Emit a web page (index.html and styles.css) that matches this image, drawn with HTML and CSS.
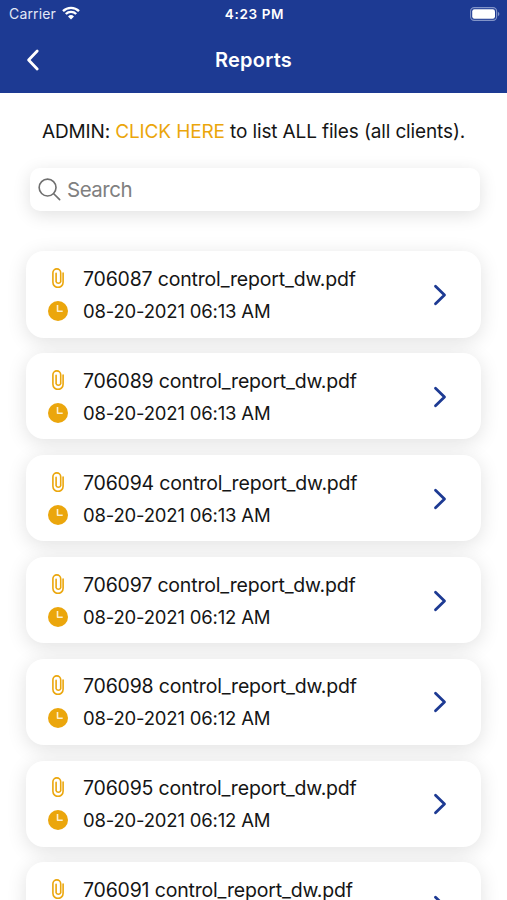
FILE: index.html
```html
<!DOCTYPE html>
<html lang="en">
    <head>
        <meta charset="utf-8">
        <title>Reports</title>
        <link rel="stylesheet" href="styles.css">
    </head>
    <body>
        <svg class="symbols">
            <symbol id="clip" viewBox="0 0 12 20">
                <path d="M11.1 5v9.3a5.1 5.1 0 0 1-10.2 0V4.8a3.9 3.9 0 0 1 7.8 0v9a2.5 2.5 0 0 1-4.6 0V5.4" />
            </symbol>
            <symbol id="clock" viewBox="0 0 20 20">
                <circle cx="10" cy="10" r="10" />
                <path d="M9.5 4v6.2h5.2" />
            </symbol>
            <symbol id="next" viewBox="0 0 14 22">
                <path d="M2.5 2.2l9 8.8-9 8.8" />
            </symbol>
        </svg>
        <header>
            <div class="status">
                <div class="carrier">
                    <span>Carrier</span>
                    <svg class="wifi" viewBox="0 0 18 14">
                        <path d="M1 5.1a11.5 11.5 0 0 1 16 0M3.8 8a7.5 7.5 0 0 1 10.4 0" />
                        <path class="dot" d="M9 13.6l-3-3.1a4.4 4.4 0 0 1 6 0z" />
                    </svg>
                </div>
                <div class="time">4:23 PM</div>
                <div class="power">
                    <svg class="battery" viewBox="0 0 30 14">
                        <rect class="shell" x=".6" y=".6" width="26" height="12.8" rx="3.6" />
                        <rect class="charge" x="2.2" y="2.2" width="22.8" height="9.6" rx="2.2" />
                        <path class="cap" d="M27.9 4.8c2 .8 2 3.6 0 4.4z" />
                    </svg>
                </div>
            </div>
            <nav>
                <a class="back" href="#"><svg viewBox="0 0 14 22"><path d="M11.2 2L2.6 11l8.6 9" /></svg></a>
                <h1>Reports</h1>
            </nav>
        </header>
        <main>
            <p class="admin">ADMIN: <a href="#">CLICK HERE</a> to list ALL files (all clients).</p>
            <label class="search">
                <svg viewBox="0 0 24 24"><circle cx="10" cy="10" r="8.8" /><path d="M16.4 16.4l6.2 6.2" /></svg>
                <input type="text" placeholder="Search">
            </label>
            <div class="list">
                <a class="card" href="#">
                    <svg class="clip"><use href="#clip" /></svg>
                    <span class="file">706087 control_report_dw.pdf</span>
                    <svg class="clock"><use href="#clock" /></svg>
                    <span class="date">08-20-2021 06:13 AM</span>
                    <svg class="next"><use href="#next" /></svg>
                </a>
                <a class="card" href="#">
                    <svg class="clip"><use href="#clip" /></svg>
                    <span class="file">706089 control_report_dw.pdf</span>
                    <svg class="clock"><use href="#clock" /></svg>
                    <span class="date">08-20-2021 06:13 AM</span>
                    <svg class="next"><use href="#next" /></svg>
                </a>
                <a class="card" href="#">
                    <svg class="clip"><use href="#clip" /></svg>
                    <span class="file">706094 control_report_dw.pdf</span>
                    <svg class="clock"><use href="#clock" /></svg>
                    <span class="date">08-20-2021 06:13 AM</span>
                    <svg class="next"><use href="#next" /></svg>
                </a>
                <a class="card" href="#">
                    <svg class="clip"><use href="#clip" /></svg>
                    <span class="file">706097 control_report_dw.pdf</span>
                    <svg class="clock"><use href="#clock" /></svg>
                    <span class="date">08-20-2021 06:12 AM</span>
                    <svg class="next"><use href="#next" /></svg>
                </a>
                <a class="card" href="#">
                    <svg class="clip"><use href="#clip" /></svg>
                    <span class="file">706098 control_report_dw.pdf</span>
                    <svg class="clock"><use href="#clock" /></svg>
                    <span class="date">08-20-2021 06:12 AM</span>
                    <svg class="next"><use href="#next" /></svg>
                </a>
                <a class="card" href="#">
                    <svg class="clip"><use href="#clip" /></svg>
                    <span class="file">706095 control_report_dw.pdf</span>
                    <svg class="clock"><use href="#clock" /></svg>
                    <span class="date">08-20-2021 06:12 AM</span>
                    <svg class="next"><use href="#next" /></svg>
                </a>
                <a class="card" href="#">
                    <svg class="clip"><use href="#clip" /></svg>
                    <span class="file">706091 control_report_dw.pdf</span>
                    <svg class="clock"><use href="#clock" /></svg>
                    <span class="date">08-20-2021 06:12 AM</span>
                    <svg class="next"><use href="#next" /></svg>
                </a>
            </div>
        </main>
    </body>
</html>
```
FILE: styles.css
```css
* {
    margin: 0;
    padding: 0;
    box-sizing: border-box;
}
:root {
    --blue: #1d3a93;
    --yellow: #eba60c;
    --fg-color: #151515;
}
body {
    height: 900px;
    overflow: hidden;
    display: flex;
    flex-direction: column;
    font-family: Inter, "Liberation Sans", sans-serif;
    background-color: #fff;
    color: var(--fg-color);
}
a {
    color: inherit;
    text-decoration: none;
}
svg {
    display: block;
    fill: none;
    stroke-linecap: round;
    stroke-linejoin: round;
}
.symbols {
    position: absolute;
    width: 0;
    height: 0;
}
header {
    flex: none;
    height: 92.5px;
    background-color: var(--blue);
    color: #fff;
}
.status {
    display: grid;
    grid-template-columns: 1fr auto 1fr;
    align-items: center;
    height: 27px;
    padding: 0 7px 0 9px;
    font-size: 14px;
}
.carrier {
    display: flex;
    align-items: center;
    gap: 6px;
    color: #e3e8f6;
    letter-spacing: .15px;
}
.wifi {
    width: 18px;
    height: 14px;
    margin-top: -2px;
    stroke: #fff;
    stroke-width: 2.4;
    stroke-linecap: butt;
}
.wifi .dot {
    fill: #fff;
    stroke: none;
}
.time {
    font-weight: 600;
    font-size: 13.5px;
    letter-spacing: .65px;
}
.power {
    justify-self: end;
}
.battery {
    width: 30px;
    height: 14px;
}
.shell {
    stroke: #8294c8;
    stroke-width: 1.1;
}
.charge {
    fill: #fff;
}
.cap {
    fill: #8294c8;
}
nav {
    display: grid;
    grid-template-columns: 1fr auto 1fr;
    align-items: center;
    height: 65px;
}
.back {
    padding-left: 26px;
}
.back svg {
    width: 14px;
    height: 22px;
    stroke: #fff;
    stroke-width: 2.8;
}
h1 {
    font-size: 20px;
    font-weight: 600;
    letter-spacing: .25px;
}
main {
    flex: 1;
    min-height: 0;
    padding: 26px 26px 0;
}
.admin {
    line-height: 25px;
    font-size: 19px;
    letter-spacing: -.13px;
    text-align: center;
    white-space: nowrap;
}
.admin a {
    color: var(--yellow);
}
.search {
    display: flex;
    align-items: center;
    gap: 6px;
    height: 43px;
    margin: 24px 1px 0 4px;
    padding: 0 10px 0 8px;
    border-radius: 10px;
    background-color: #fff;
    box-shadow: 0 4px 18px rgba(0, 0, 0, .12);
}
.search svg {
    flex: none;
    width: 23px;
    height: 23px;
    stroke: #707070;
    stroke-width: 1.7;
}
.search input {
    flex: 1;
    min-width: 0;
    border: 0;
    outline: 0;
    background: none;
    font: inherit;
    font-size: 20.5px;
    letter-spacing: -.5px;
}
.search input::placeholder {
    color: #808080;
}
.list {
    display: flex;
    flex-direction: column;
    gap: 15.4px;
    margin-top: 40.6px;
}
.card {
    flex: none;
    display: grid;
    grid-template-columns: 20px 1fr 14px;
    grid-template-rows: 32px 32px;
    column-gap: 15px;
    align-content: center;
    align-items: center;
    height: 86.5px;
    padding: 1px 34px 0 22px;
    border-radius: 18px;
    background-color: #fff;
    box-shadow: 0 4px 20px rgba(0, 0, 0, .12);
}
.clip {
    justify-self: center;
    width: 12px;
    height: 20px;
    margin-top: -2px;
    stroke: var(--yellow);
    stroke-width: 1.6;
}
.clock {
    width: 20px;
    height: 20px;
    grid-row: 2;
    fill: var(--yellow);
}
#clock path {
    fill: none;
    stroke: #fdf0cf;
    stroke-width: 1.6;
    stroke-linecap: butt;
}
.file, .date {
    grid-column: 2;
    white-space: nowrap;
    font-size: 19.5px;
    letter-spacing: -.18px;
}
.date {
    font-size: 18.5px;
}
.next {
    grid-area: 1 / 3 / 3 / 4;
    width: 14px;
    height: 22px;
    stroke: var(--blue);
    stroke-width: 2.8;
}
```
